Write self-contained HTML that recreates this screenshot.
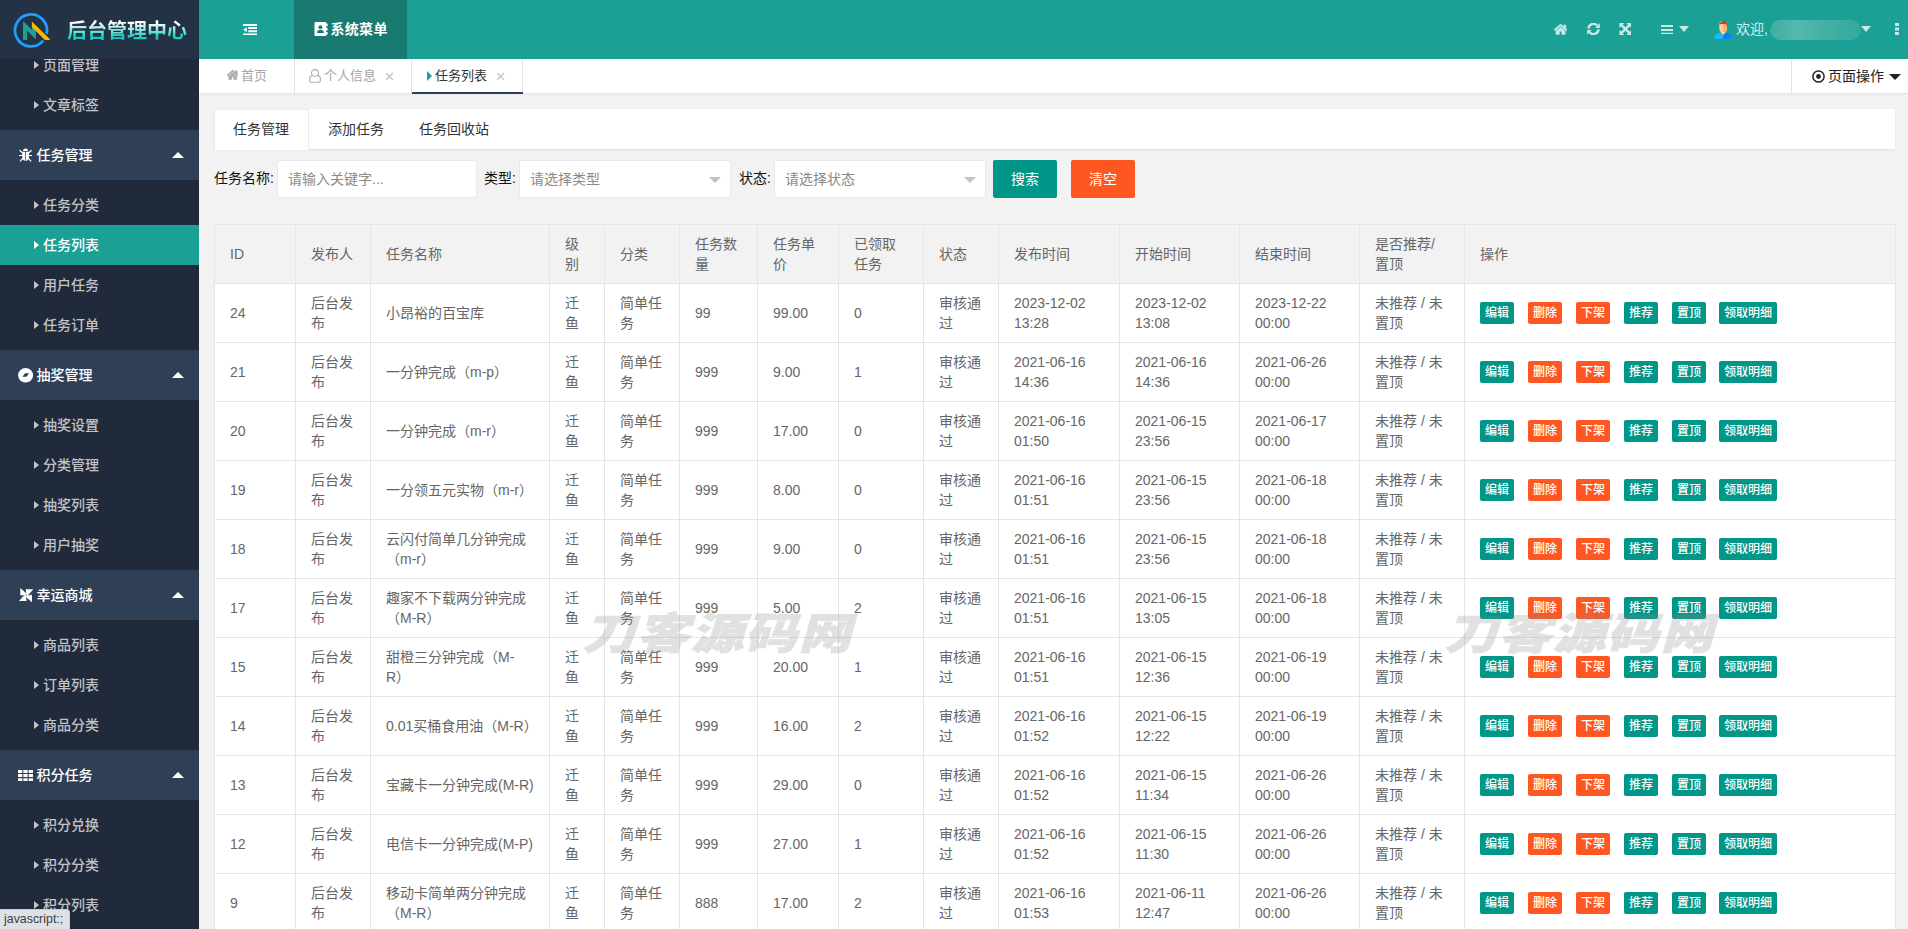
<!DOCTYPE html>
<html lang="zh-CN">
<head>
<meta charset="utf-8">
<title>后台管理中心</title>
<style>
*{box-sizing:border-box;margin:0;padding:0}
html,body{width:1908px;height:929px;overflow:hidden;background:#f2f2f2}
body{font-family:"Liberation Sans","Noto Sans CJK SC",sans-serif;font-size:14px;color:#666;position:relative;line-height:20px}
.abs{position:absolute}
#side{position:absolute;left:0;top:0;width:199px;height:929px;background:#202a3b;overflow:hidden}
#logo{position:absolute;left:0;top:0;width:199px;height:59px;background:#243246}
#logo .t{position:absolute;left:67px;top:16px;font-size:20px;line-height:30px;font-weight:700;letter-spacing:0px;background:linear-gradient(180deg,#fff 22%,#20d0be 68%,#19a9e3 92%);-webkit-background-clip:text;background-clip:text;color:transparent;white-space:nowrap}
.si{position:absolute;left:0;width:199px;height:40px;line-height:41px;font-weight:500;color:rgba(255,255,255,.72);font-size:14px;white-space:nowrap}
.si .tx{position:absolute;left:43px;top:0}
.si .ar{position:absolute;left:33.500px;top:16px;width:0;height:0;border-left:5.500px solid rgba(255,255,255,.72);border-top:4.200px solid transparent;border-bottom:4.200px solid transparent}
.si.act{background:#1aa094;color:#fff}
.si.act .ar{border-left-color:#fff}
.sp{position:absolute;left:0;width:199px;height:50px;line-height:51px;background:#2f4056;color:#fff;font-size:14px;font-weight:500;white-space:nowrap}
.sp .tx{position:absolute;left:36.500px;top:0}
.sp .pi{position:absolute}
.sp .up{position:absolute;left:172px;top:22px;width:0;height:0;border-bottom:6px solid #fff;border-left:6px solid transparent;border-right:6px solid transparent}
#hd{position:absolute;left:199px;top:0;width:1709px;height:59px;background:#1aa094}
#hd .sel{position:absolute;left:95px;top:0;width:113px;height:59px;background:#197a71}
#tabs{position:absolute;left:199px;top:59px;width:1709px;height:34px;background:#fff;box-shadow:0 1px 2px rgba(0,0,0,.07)}
.tb{position:absolute;top:0;height:35px;line-height:34px;font-size:13px;color:#a6a6a6;white-space:nowrap}
#card{position:absolute;left:214px;top:109px;width:1681px;height:40px;background:#fff;box-shadow:0 1px 2px rgba(0,0,0,.08)}
.ct{position:absolute;top:0;height:40px;line-height:40px;color:#333;font-size:14px;white-space:nowrap}
.lbl{position:absolute;top:160px;height:38px;line-height:37px;color:#111;font-size:14px;white-space:nowrap}
.inp{position:absolute;top:160px;height:38px;background:#fff;border:1px solid #e9e9e9;border-radius:2px;line-height:36px;color:#8a8a8a;font-size:14px;padding-left:10px;white-space:nowrap}
.inp .dn{position:absolute;right:9px;top:15.500px;width:0;height:0;border-top:6px solid #c2c2c2;border-left:6px solid transparent;border-right:6px solid transparent}
.btn{position:absolute;top:160px;height:38px;line-height:38px;color:#fff;font-size:14px;text-align:center;border-radius:2px}
table{position:absolute;left:214px;top:224px;width:1681px;border-collapse:collapse;table-layout:fixed;background:#fff}
th,td{border:1px solid #e6e6e6;padding:9px 15px;text-align:left;font-weight:400;font-size:14px;line-height:20px;color:#666;height:59px;vertical-align:middle;word-break:break-all}
th{background:#f2f2f2}
.b{display:inline-block;height:22px;line-height:22px;padding:0 5px;font-size:12px;font-weight:500;color:#fff;border-radius:2px;margin-right:14px;vertical-align:middle;white-space:nowrap}
.g{background:#009688}.o{background:#ff5722}
.wm{position:absolute;font-size:43px;line-height:50px;font-weight:900;color:#8c8c8c;-webkit-text-stroke:.9px #8c8c8c;opacity:.25;white-space:nowrap;letter-spacing:1px;transform-origin:0 100%;transform:scaleX(1.225) skewX(-13deg)}
#status{position:absolute;left:0;top:909px;height:20px;width:70px;background:#dee1e6;border-top:1px solid #c9ccd1;border-right:1px solid #c9ccd1;border-top-right-radius:4px;font-size:12.400px;line-height:19px;color:#3c4043;padding-left:4px;white-space:nowrap}
</style>
</head>
<body>

<div id="side">
<div class="si" style="top:45px"><i class="ar"></i><span class="tx">页面管理</span></div>
<div class="si" style="top:85px"><i class="ar"></i><span class="tx">文章标签</span></div>
<div class="sp" style="top:130px"><svg class="pi" style="left:18.800px;top:18px" viewBox="0 0 13.200 13.600" width="13.200" height="13.600"><path fill="#fff" d="M4.100 2.900A2.500 2.500 0 0 1 9.100 2.900zM3.200 3.700H6.250V12.900C4.500 12.700 3.200 11.200 3.200 9.200zM10 3.700H6.950V12.900C8.700 12.700 10 11.200 10 9.200z"/><path stroke="#fff" stroke-width="1.200" fill="none" d="M.6 2.200L3.400 4.800M0 7.500H3.300M1.100 13.300L3.600 10.500M12.600 2.200L9.800 4.800M13.200 7.500H9.900M12.100 13.300L9.600 10.500"/></svg><span class="tx">任务管理</span><i class="up"></i></div>
<div class="si" style="top:185px"><i class="ar"></i><span class="tx">任务分类</span></div>
<div class="si act" style="top:225px"><i class="ar"></i><span class="tx">任务列表</span></div>
<div class="si" style="top:265px"><i class="ar"></i><span class="tx">用户任务</span></div>
<div class="si" style="top:305px"><i class="ar"></i><span class="tx">任务订单</span></div>
<div class="sp" style="top:350px"><svg class="pi" style="left:18.400px;top:18px" viewBox="0 0 15.200 14.600" width="15.200" height="14.600"><ellipse cx="7.600" cy="7.300" rx="7.500" ry="7.200" fill="#fff"/><path fill="#2f4056" d="M4.400 8.800L7.100 5.300H11.100L8.400 8.800z"/></svg><span class="tx">抽奖管理</span><i class="up"></i></div>
<div class="si" style="top:405px"><i class="ar"></i><span class="tx">抽奖设置</span></div>
<div class="si" style="top:445px"><i class="ar"></i><span class="tx">分类管理</span></div>
<div class="si" style="top:485px"><i class="ar"></i><span class="tx">抽奖列表</span></div>
<div class="si" style="top:525px"><i class="ar"></i><span class="tx">用户抽奖</span></div>
<div class="sp" style="top:570px"><svg class="pi" style="left:18.700px;top:18px" viewBox="0 0 14.300 14.300" width="14.300" height="14.300"><path fill="#fff" d="M1.300 0L8.600 6.400 1.300 7.600zM14.300 1.300L7.900 8.600 6.700 1.300zM13 14.300L5.700 7.900 13 6.700zM0 13L6.400 5.700 7.600 13z"/></svg><span class="tx">幸运商城</span><i class="up"></i></div>
<div class="si" style="top:625px"><i class="ar"></i><span class="tx">商品列表</span></div>
<div class="si" style="top:665px"><i class="ar"></i><span class="tx">订单列表</span></div>
<div class="si" style="top:705px"><i class="ar"></i><span class="tx">商品分类</span></div>
<div class="sp" style="top:750px"><svg class="pi" style="left:18.300px;top:19.500px" viewBox="0 0 15 11.200" width="15" height="11.200"><path fill="#fff" d="M0 0h4.300v3H0zM5.350 0h4.300v3h-4.300zM10.700 0H15v3h-4.300zM0 4.100h4.300v3H0zM5.350 4.100h4.300v3h-4.300zM10.700 4.100H15v3h-4.300zM0 8.200h4.300v3H0zM5.350 8.200h4.300v3h-4.300zM10.700 8.200H15v3h-4.300z"/></svg><span class="tx">积分任务</span><i class="up"></i></div>
<div class="si" style="top:805px"><i class="ar"></i><span class="tx">积分兑换</span></div>
<div class="si" style="top:845px"><i class="ar"></i><span class="tx">积分分类</span></div>
<div class="si" style="top:885px"><i class="ar"></i><span class="tx">积分列表</span></div>
<div id="logo">
<svg class="abs" style="left:0;top:0" width="60" height="59" viewBox="0 0 60 59">
<path d="M43.290 40.640A16 16 0 1 1 46.610 33.890" fill="none" stroke="#1e9fff" stroke-width="2.700"/>
<path d="M23 21.100L31.900 29.800V25h4V39.600L27.100 30.800V40H23z" fill="#1aa094"/>
<path d="M31.900 21.400L50 39.200 49.600 40H44.800L31.900 27.100z" fill="#ffb800"/>
</svg>
<div class="t">后台管理中心</div>
</div>
</div>
<div id="hd">
<div class="sel"></div>
<svg class="abs" style="left:43.800px;top:24.200px" width="14.500" height="11.300" viewBox="0 0 15 12" preserveAspectRatio="none"><path fill="#fff" d="M0 0h15v2H0zM5.500 3.300H15v2H5.500zM5.500 6.700H15v2H5.500zM0 10h15v2H0zM3.800 3.300v5.400L0.400 6z"/></svg>
<svg class="abs" style="left:115px;top:22.100px" width="13.600" height="14.200" viewBox="0 0 14 15" preserveAspectRatio="none"><path fill="#fff" d="M2 0h10.500v1.500H14v3h-1.500v1.500H14v3h-1.500v1.500H14v3h-1.500V15H2a1.500 1.500 0 0 1-1.500-1.500v-12A1.500 1.500 0 0 1 2 0z"/><circle cx="6.600" cy="5.500" r="2" fill="#197a71"/><path fill="#197a71" d="M3 11.500c0-2.200 1.500-3.300 3.600-3.300s3.600 1.100 3.600 3.300z"/></svg>
<div class="abs" style="left:131.500px;top:0;height:59px;line-height:58px;color:#fff;font-size:14px;font-weight:700;letter-spacing:.3px;white-space:nowrap">系统菜单</div>
<svg class="abs" style="left:1354.800px;top:24px" width="13.200" height="10.600" viewBox="0 0 14 11.200"><path fill="#c5e9e5" stroke="#c5e9e5" stroke-width=".6" stroke-linejoin="round" d="M7 0L10.400 2.900V1h2.100V4.700L14 5.900l-1 1.300L7 2.200 1 7.200 0 5.900zM7 3.300l4.900 4.100v3.800H8.300V8H5.700v3.200H2.100V7.400z"/></svg>
<svg class="abs" style="left:1387.500px;top:23.400px" width="13" height="12" viewBox="0 0 13 12"><path fill="none" stroke="#c5e9e5" stroke-width="2.400" d="M1.500 5.600A5 5 0 0 1 10.400 2.800M11.500 6.400A5 5 0 0 1 2.600 9.200"/><path fill="#c5e9e5" d="M12.900 0.200v4.700H8.200zM.1 11.800V7.100h4.700z"/></svg>
<svg class="abs" style="left:1419.600px;top:23.400px" width="12.800" height="12" viewBox="0 0 13 13"><path stroke="#c5e9e5" stroke-width="2.800" d="M2 2l9 9M11 2l-9 9"/><path fill="#c5e9e5" d="M0 0h5.400L0 5.400zM13 0v5.400L7.600 0zM0 13V7.600L5.400 13zM13 13H7.600L13 7.600z"/></svg>
<svg class="abs" style="left:1461.500px;top:24.600px" width="12.800" height="9.800" viewBox="0 0 13 9.800"><path fill="#c5e9e5" d="M0 0h13v2H0zM0 3.900h13v2H0zM0 7.800h13v2H0z"/></svg>
<i class="abs" style="left:1479.500px;top:26px;border-top:6.400px solid #c5e9e5;border-left:5.800px solid transparent;border-right:5.800px solid transparent"></i>
<svg class="abs" style="left:1515px;top:21px" width="18.300" height="18.200" viewBox="0 0 18 19"><path fill="#ffcf94" d="M5 4.500a4 4.500 0 0 1 8 0v3a4 4.500 0 0 1-8 0z"/><path fill="#ffb07a" d="M9 0a4 4.500 0 0 1 4 4.500v3A4 4.500 0 0 1 9 12z"/><path fill="#c0392b" d="M5.500 3.500C6 1 8 0 9.500 0c2.500 0 3.800 2 3.500 5-1-2-3-3-7.500-1.500z"/><path fill="#19b5fe" d="M0 19v-3c0-2 2-3.500 5.500-4l3.500 2 3.500-2c3.500.5 5.500 2 5.500 4v3z"/><path fill="#0a84e8" d="M9 19v-5l3.500-2c3.500.5 5.500 2 5.500 4v3z"/><path fill="#ffcf94" d="M6 11.500h6L9 14.500z"/></svg>
<div class="abs" style="left:1537px;top:0;height:59px;line-height:58px;color:#d4efec;font-size:14px;white-space:nowrap">欢迎,</div>
<div class="abs" style="left:1571px;top:20px;width:91px;height:20px;border-radius:10px;background:linear-gradient(90deg,#3dada2,#56b9af 30%,#43b0a5 60%,#34a99e);filter:blur(.6px)"></div>
<i class="abs" style="left:1662px;top:26px;border-top:6.400px solid #c5e9e5;border-left:5.800px solid transparent;border-right:5.800px solid transparent"></i>
<svg class="abs" style="left:1696px;top:23px" width="4" height="12" viewBox="0 0 4 12"><path fill="#c5e9e5" d="M0 0h4v3H0zM0 4.500h4v3H0zM0 9h4v3H0z"/></svg>
</div>
<div id="tabs">
<div class="abs" style="left:95px;top:0;width:1px;height:34px;background:#e2e2e2"></div>
<div class="abs" style="left:212px;top:0;width:1px;height:34px;background:#e2e2e2"></div>
<div class="abs" style="left:323px;top:0;width:1px;height:34px;background:#e2e2e2"></div>
<div class="abs" style="left:213px;top:33px;width:111px;height:2px;background:#2f4056"></div>
<div class="abs" style="left:1592px;top:0;width:1px;height:34px;background:#e2e2e2"></div>
<svg class="abs" style="left:27.800px;top:11.400px" width="11.400" height="9.500" viewBox="0 0 14 11.200" preserveAspectRatio="none"><path fill="#a9acb0" stroke="#a9acb0" stroke-width=".7" stroke-linejoin="round" d="M7 0L10.400 2.900V1h2.100V4.700L14 5.900l-1 1.300L7 2.200 1 7.200 0 5.900zM7 3.300l4.900 4.100v3.800H8.300V8H5.700v3.200H2.100V7.400z"/></svg>
<div class="tb" style="left:42px">首页</div>
<svg class="abs" style="left:110px;top:9.500px" width="12" height="14" viewBox="0 0 12 14"><ellipse cx="6" cy="3.900" rx="3.500" ry="3.300" fill="#fff" stroke="#b0b0b0" stroke-width="1.100"/><path d="M3.200 6.200C1.400 6.800.6 8.200.6 10v1.600c0 1 .7 1.700 1.700 1.700h7.400c1 0 1.700-.7 1.700-1.700V10c0-1.800-.8-3.200-2.600-3.800" fill="none" stroke="#b0b0b0" stroke-width="1.100"/></svg>
<div class="tb" style="left:125px">个人信息</div>
<div class="tb" style="left:185.500px;top:1px;font-size:17px;color:#c4c4c4">×</div>
<i class="abs" style="left:228px;top:12px;border-left:5px solid #1aa094;border-top:5px solid transparent;border-bottom:5px solid transparent"></i>
<div class="tb" style="left:236px;color:#333">任务列表</div>
<div class="tb" style="left:296.500px;top:1px;font-size:17px;color:#c4c4c4">×</div>
<svg class="abs" style="left:1613px;top:11px" width="13" height="13" viewBox="0 0 13 13"><circle cx="6.500" cy="6.500" r="5.600" fill="none" stroke="#222" stroke-width="1.500"/><circle cx="6.500" cy="6.500" r="2.400" fill="#222"/></svg>
<div class="tb" style="left:1629px;color:#222;font-size:14px">页面操作</div>
<i class="abs" style="left:1690px;top:15px;border-top:6px solid #222;border-left:6px solid transparent;border-right:6px solid transparent"></i>
</div>
<div id="card">
<div class="abs" style="left:0;top:0;width:95px;height:41px;background:#fff;border:1px solid #ebebeb;border-bottom:none"></div>
<div class="ct" style="left:19px">任务管理</div>
<div class="ct" style="left:114px">添加任务</div>
<div class="ct" style="left:205px">任务回收站</div>
</div>
<div class="lbl" style="left:214px">任务名称:</div>
<div class="inp" style="left:277px;width:200px">请输入关键字...</div>
<div class="lbl" style="left:484px">类型:</div>
<div class="inp" style="left:519px;width:212px">请选择类型<i class="dn"></i></div>
<div class="lbl" style="left:739px">状态:</div>
<div class="inp" style="left:774px;width:212px">请选择状态<i class="dn"></i></div>
<div class="btn g" style="left:993px;width:64px">搜索</div>
<div class="btn o" style="left:1071px;width:64px">清空</div>

<table><colgroup><col style="width:81px"><col style="width:75px"><col style="width:179px"><col style="width:55px"><col style="width:75px"><col style="width:78px"><col style="width:81px"><col style="width:85px"><col style="width:75px"><col style="width:121px"><col style="width:120px"><col style="width:120px"><col style="width:105px"><col style="width:431px"></colgroup>
<thead><tr><th>ID</th><th>发布人</th><th>任务名称</th><th>级<br>别</th><th>分类</th><th>任务数<br>量</th><th>任务单<br>价</th><th>已领取<br>任务</th><th>状态</th><th>发布时间</th><th>开始时间</th><th>结束时间</th><th>是否推荐/<br>置顶</th><th>操作</th></tr></thead><tbody>
<tr><td>24</td><td>后台发<br>布</td><td>小昂裕的百宝库</td><td>迁<br>鱼</td><td>简单任<br>务</td><td>99</td><td>99.00</td><td>0</td><td>审核通<br>过</td><td>2023-12-02<br>13:28</td><td>2023-12-02<br>13:08</td><td>2023-12-22<br>00:00</td><td>未推荐 / 未<br>置顶</td><td><span class="b g">编辑</span><span class="b o">删除</span><span class="b o">下架</span><span class="b g">推荐</span><span class="b g" style="margin-right:13px">置顶</span><span class="b g">领取明细</span></td></tr>
<tr><td>21</td><td>后台发<br>布</td><td>一分钟完成（m-p）</td><td>迁<br>鱼</td><td>简单任<br>务</td><td>999</td><td>9.00</td><td>1</td><td>审核通<br>过</td><td>2021-06-16<br>14:36</td><td>2021-06-16<br>14:36</td><td>2021-06-26<br>00:00</td><td>未推荐 / 未<br>置顶</td><td><span class="b g">编辑</span><span class="b o">删除</span><span class="b o">下架</span><span class="b g">推荐</span><span class="b g" style="margin-right:13px">置顶</span><span class="b g">领取明细</span></td></tr>
<tr><td>20</td><td>后台发<br>布</td><td>一分钟完成（m-r）</td><td>迁<br>鱼</td><td>简单任<br>务</td><td>999</td><td>17.00</td><td>0</td><td>审核通<br>过</td><td>2021-06-16<br>01:50</td><td>2021-06-15<br>23:56</td><td>2021-06-17<br>00:00</td><td>未推荐 / 未<br>置顶</td><td><span class="b g">编辑</span><span class="b o">删除</span><span class="b o">下架</span><span class="b g">推荐</span><span class="b g" style="margin-right:13px">置顶</span><span class="b g">领取明细</span></td></tr>
<tr><td>19</td><td>后台发<br>布</td><td>一分领五元实物（m-r）</td><td>迁<br>鱼</td><td>简单任<br>务</td><td>999</td><td>8.00</td><td>0</td><td>审核通<br>过</td><td>2021-06-16<br>01:51</td><td>2021-06-15<br>23:56</td><td>2021-06-18<br>00:00</td><td>未推荐 / 未<br>置顶</td><td><span class="b g">编辑</span><span class="b o">删除</span><span class="b o">下架</span><span class="b g">推荐</span><span class="b g" style="margin-right:13px">置顶</span><span class="b g">领取明细</span></td></tr>
<tr><td>18</td><td>后台发<br>布</td><td>云闪付简单几分钟完成<br>（m-r）</td><td>迁<br>鱼</td><td>简单任<br>务</td><td>999</td><td>9.00</td><td>0</td><td>审核通<br>过</td><td>2021-06-16<br>01:51</td><td>2021-06-15<br>23:56</td><td>2021-06-18<br>00:00</td><td>未推荐 / 未<br>置顶</td><td><span class="b g">编辑</span><span class="b o">删除</span><span class="b o">下架</span><span class="b g">推荐</span><span class="b g" style="margin-right:13px">置顶</span><span class="b g">领取明细</span></td></tr>
<tr><td>17</td><td>后台发<br>布</td><td>趣家不下载两分钟完成<br>（M-R）</td><td>迁<br>鱼</td><td>简单任<br>务</td><td>999</td><td>5.00</td><td>2</td><td>审核通<br>过</td><td>2021-06-16<br>01:51</td><td>2021-06-15<br>13:05</td><td>2021-06-18<br>00:00</td><td>未推荐 / 未<br>置顶</td><td><span class="b g">编辑</span><span class="b o">删除</span><span class="b o">下架</span><span class="b g">推荐</span><span class="b g" style="margin-right:13px">置顶</span><span class="b g">领取明细</span></td></tr>
<tr><td>15</td><td>后台发<br>布</td><td>甜橙三分钟完成（M-<br>R）</td><td>迁<br>鱼</td><td>简单任<br>务</td><td>999</td><td>20.00</td><td>1</td><td>审核通<br>过</td><td>2021-06-16<br>01:51</td><td>2021-06-15<br>12:36</td><td>2021-06-19<br>00:00</td><td>未推荐 / 未<br>置顶</td><td><span class="b g">编辑</span><span class="b o">删除</span><span class="b o">下架</span><span class="b g">推荐</span><span class="b g" style="margin-right:13px">置顶</span><span class="b g">领取明细</span></td></tr>
<tr><td>14</td><td>后台发<br>布</td><td>0.01买桶食用油（M-R）</td><td>迁<br>鱼</td><td>简单任<br>务</td><td>999</td><td>16.00</td><td>2</td><td>审核通<br>过</td><td>2021-06-16<br>01:52</td><td>2021-06-15<br>12:22</td><td>2021-06-19<br>00:00</td><td>未推荐 / 未<br>置顶</td><td><span class="b g">编辑</span><span class="b o">删除</span><span class="b o">下架</span><span class="b g">推荐</span><span class="b g" style="margin-right:13px">置顶</span><span class="b g">领取明细</span></td></tr>
<tr><td>13</td><td>后台发<br>布</td><td>宝藏卡一分钟完成(M-R)</td><td>迁<br>鱼</td><td>简单任<br>务</td><td>999</td><td>29.00</td><td>0</td><td>审核通<br>过</td><td>2021-06-16<br>01:52</td><td>2021-06-15<br>11:34</td><td>2021-06-26<br>00:00</td><td>未推荐 / 未<br>置顶</td><td><span class="b g">编辑</span><span class="b o">删除</span><span class="b o">下架</span><span class="b g">推荐</span><span class="b g" style="margin-right:13px">置顶</span><span class="b g">领取明细</span></td></tr>
<tr><td>12</td><td>后台发<br>布</td><td>电信卡一分钟完成(M-P)</td><td>迁<br>鱼</td><td>简单任<br>务</td><td>999</td><td>27.00</td><td>1</td><td>审核通<br>过</td><td>2021-06-16<br>01:52</td><td>2021-06-15<br>11:30</td><td>2021-06-26<br>00:00</td><td>未推荐 / 未<br>置顶</td><td><span class="b g">编辑</span><span class="b o">删除</span><span class="b o">下架</span><span class="b g">推荐</span><span class="b g" style="margin-right:13px">置顶</span><span class="b g">领取明细</span></td></tr>
<tr><td>9</td><td>后台发<br>布</td><td>移动卡简单两分钟完成<br>（M-R）</td><td>迁<br>鱼</td><td>简单任<br>务</td><td>888</td><td>17.00</td><td>2</td><td>审核通<br>过</td><td>2021-06-16<br>01:53</td><td>2021-06-11<br>12:47</td><td>2021-06-26<br>00:00</td><td>未推荐 / 未<br>置顶</td><td><span class="b g">编辑</span><span class="b o">删除</span><span class="b o">下架</span><span class="b g">推荐</span><span class="b g" style="margin-right:13px">置顶</span><span class="b g">领取明细</span></td></tr>
</tbody></table>
<div class="wm" style="left:580px;top:609px">刀客源码网</div>
<div class="wm" style="left:1442px;top:609px">刀客源码网</div>
<div id="status">javascript:;</div>
</body></html>
